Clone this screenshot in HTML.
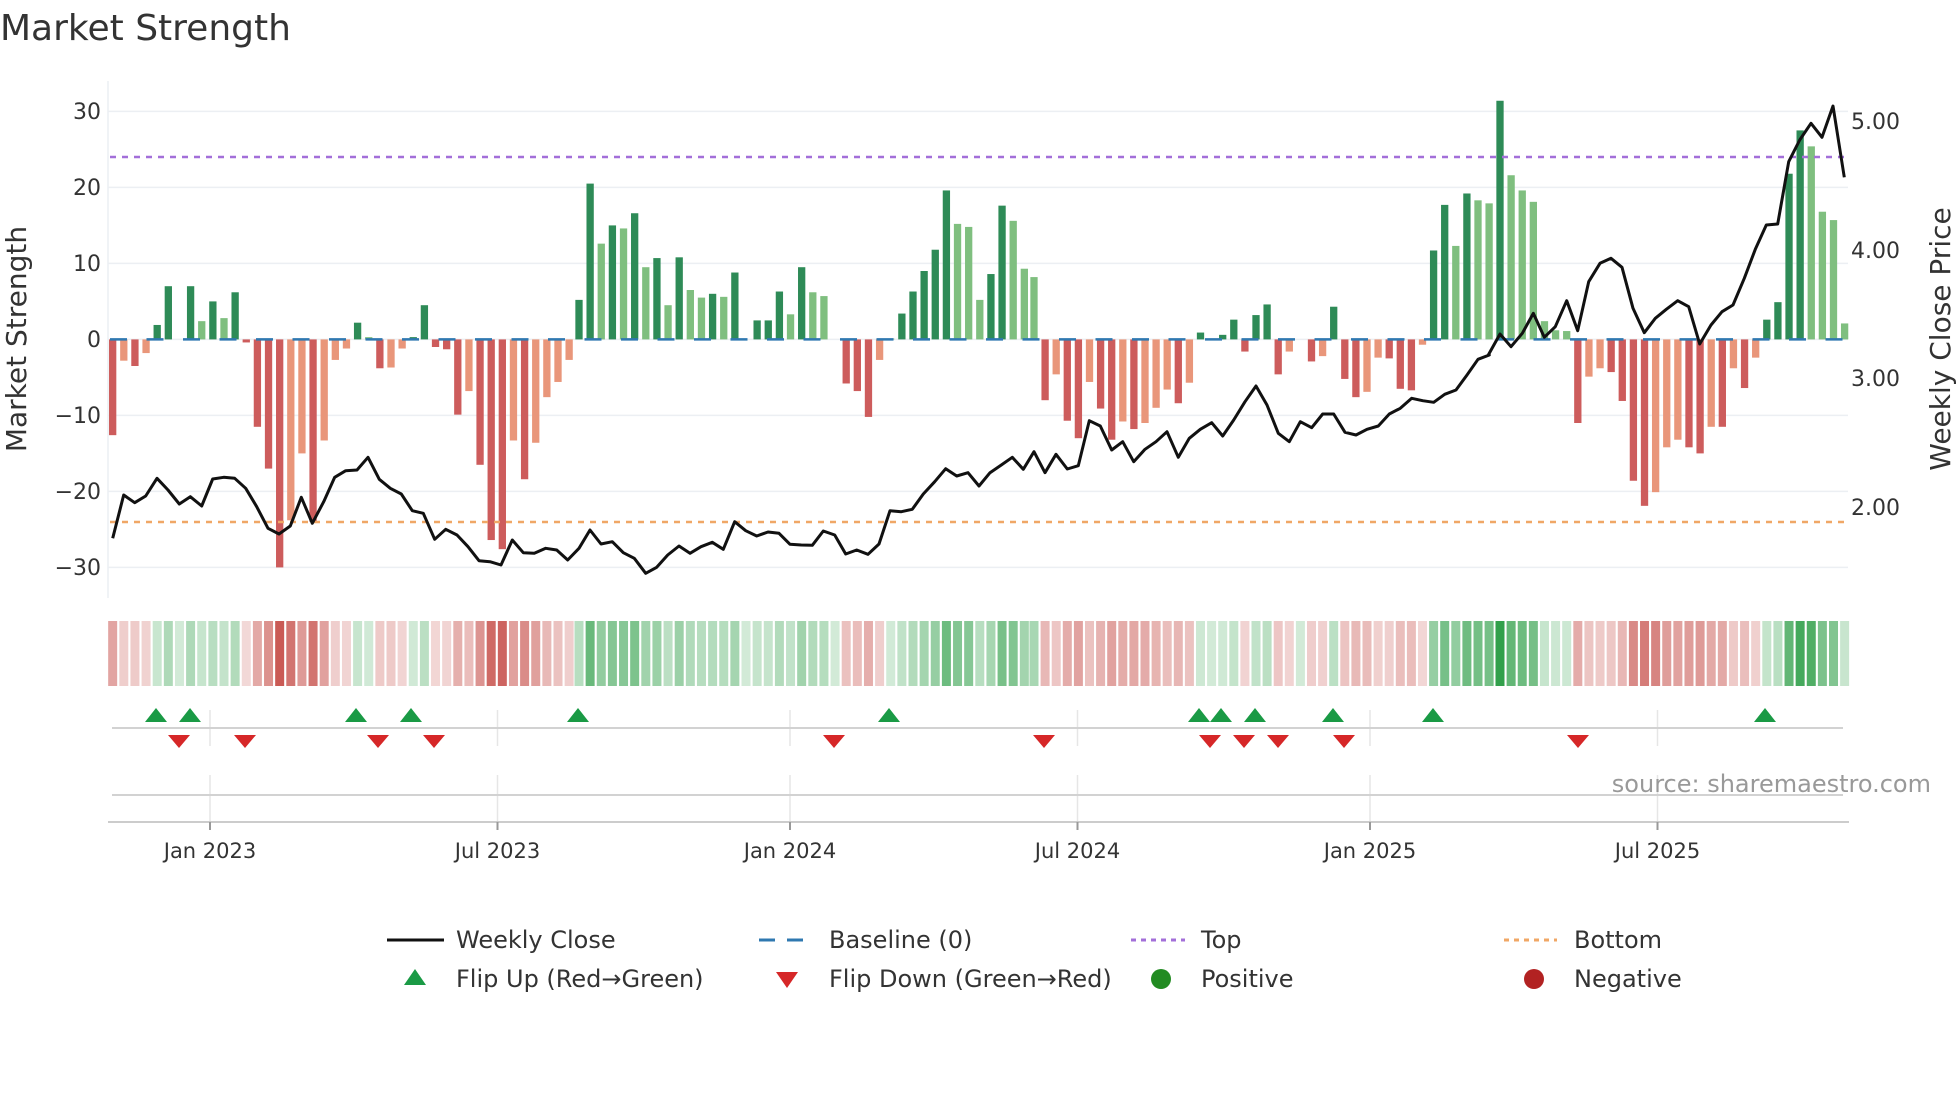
<!DOCTYPE html>
<html><head><meta charset="utf-8">
<style>
html,body{margin:0;padding:0;background:#fff;}
svg{display:block;font-family:"DejaVu Sans","Liberation Sans",sans-serif;}
</style></head>
<body>
<svg id="c" width="1960" height="1102" viewBox="0 0 1960 1102" xmlns="http://www.w3.org/2000/svg">
<rect width="1960" height="1102" fill="#fff"/>
<text x="0" y="40" font-size="36" fill="#333">Market Strength</text>
<g id="grid" stroke="#eceff3" stroke-width="1.5">
<line x1="108" y1="81" x2="108" y2="598"/>
<line x1="108" y1="111.4" x2="1848" y2="111.4"/>
<line x1="108" y1="187.4" x2="1848" y2="187.4"/>
<line x1="108" y1="263.4" x2="1848" y2="263.4"/>
<line x1="108" y1="339.4" x2="1848" y2="339.4"/>
<line x1="108" y1="415.4" x2="1848" y2="415.4"/>
<line x1="108" y1="491.4" x2="1848" y2="491.4"/>
<line x1="108" y1="567.4" x2="1848" y2="567.4"/>
</g>
<g font-size="22" fill="#333" text-anchor="end">
<text x="101" y="119">30</text>
<text x="101" y="195">20</text>
<text x="101" y="271">10</text>
<text x="101" y="347">0</text>
<text x="101" y="423">−10</text>
<text x="101" y="499">−20</text>
<text x="101" y="575">−30</text>
</g>
<g font-size="22" fill="#333">
<text x="1851" y="129">5.00</text>
<text x="1851" y="258">4.00</text>
<text x="1851" y="386">3.00</text>
<text x="1851" y="515">2.00</text>
</g>
<text transform="translate(26,339) rotate(-90)" font-size="28" fill="#333" text-anchor="middle">Market Strength</text>
<text transform="translate(1950,339) rotate(-90)" font-size="28" fill="#333" text-anchor="middle">Weekly Close Price</text>
<g id="bars"></g>
<g id="strip"></g>
<line x1="110" y1="157" x2="1845" y2="157" stroke="#a36fd9" stroke-width="2.5" stroke-dasharray="6,6"/>
<line x1="110" y1="522" x2="1845" y2="522" stroke="#f0a766" stroke-width="2.5" stroke-dasharray="6,6"/>
<g id="base"></g>
<polyline id="price" fill="none" stroke="#111" stroke-width="3" stroke-linejoin="round"/>
<g stroke="#e6e6e6" stroke-width="1.5" id="vg"></g>
<line x1="112" y1="728" x2="1843" y2="728" stroke="#d2d2d2" stroke-width="2"/>
<line x1="112" y1="795" x2="1843" y2="795" stroke="#d2d2d2" stroke-width="2"/>
<line x1="108" y1="822" x2="1849" y2="822" stroke="#cccccc" stroke-width="2"/>
<g id="flips"></g>
<g id="ticks" stroke="#999" stroke-width="2"></g>
<g font-size="21" fill="#333" text-anchor="middle">
<text x="210" y="858">Jan 2023</text>
<text x="497.5" y="858">Jul 2023</text>
<text x="790" y="858">Jan 2024</text>
<text x="1077.5" y="858">Jul 2024</text>
<text x="1370" y="858">Jan 2025</text>
<text x="1657.5" y="858">Jul 2025</text>
</g>
<text x="1931" y="792" font-size="24" fill="#999" text-anchor="end">source: sharemaestro.com</text>
<g font-size="24" fill="#333">
<line x1="387" y1="940" x2="444" y2="940" stroke="#111" stroke-width="3"/>
<text x="456" y="948">Weekly Close</text>
<line x1="759" y1="940" x2="812" y2="940" stroke="#2f78b0" stroke-width="3" stroke-dasharray="16,12"/>
<text x="829" y="948">Baseline (0)</text>
<line x1="1131" y1="940" x2="1185" y2="940" stroke="#a36fd9" stroke-width="3" stroke-dasharray="5,5"/>
<text x="1201" y="948">Top</text>
<line x1="1504" y1="940" x2="1557" y2="940" stroke="#f0a766" stroke-width="3" stroke-dasharray="5,5"/>
<text x="1574" y="948">Bottom</text>
<polygon points="404,985 426,985 415,969" fill="#1a9a45"/>
<text x="456" y="987">Flip Up (Red→Green)</text>
<polygon points="776,972 798,972 787,988" fill="#d62728"/>
<text x="829" y="987">Flip Down (Green→Red)</text>
<circle cx="1161" cy="979" r="10" fill="#228b22"/>
<text x="1201" y="987">Positive</text>
<circle cx="1534" cy="979" r="10" fill="#b22222"/>
<text x="1574" y="987">Negative</text>
</g>
</svg>
<script>
(function(){
var NS="http://www.w3.org/2000/svg";
function el(t,a,p){var e=document.createElementNS(NS,t);for(var k in a)e.setAttribute(k,a[k]);p.appendChild(e);return e;}
var segs=[
{o:100,s:38,st:33.4,v:"-12.6d,-2.8l,-3.5d,-1.8l,1.9d,7d,0d,7d,2.4l,5d,2.8l,6.2d,-0.4d,-11.5d,-17d,-30d,-23.8l,-15l,-24d,-13.3l,-2.7l,-1.2l,2.2d,0.3l,-3.8d,-3.7l,-1.2l,0.3d,4.5d,-1d,-1.3d,-9.9d,-6.8l,-16.5d,-26.4d,-27.6d,-13.3l,-18.4d,-13.6l,-7.6l,-5.6l,-2.7l"},
{o:560,s:57,st:33.4,v:"5.2d,20.5d,12.6l,15d,14.6l,16.6d,9.5l,10.7d,4.5l,10.8d,6.5l,5.5l,6d,5.6l,8.8d,0d,2.5d,2.5d,6.3d,3.3l,9.5d,6.2l,5.7l,0d,-5.8d,-6.8d,-10.2d,-2.7l,0.1l,3.4d,6.3d,9d,11.8d,19.6d,15.2l,14.8l,5.2l,8.6d,17.6d,15.6l,9.3l"},
{o:1020,s:42,st:33.3,v:"8.2l,-8d,-4.6l,-10.7d,-13d,-5.6l,-9.1d,-13.2d,-10.8l,-11.8d,-11l,-9l,-6.6l,-8.4d,-5.7l,0.9d,0d,0.6d,2.6d,-1.6d,3.2d,4.6d,-4.6d,-1.6l,0d,-2.9d,-2.2l,4.3d,-5.2d,-7.6d,-6.9l,-2.4l,-2.5d,-6.5d,-6.7d,-0.7l,11.7d,17.7d,12.3l,19.2d,18.3l,17.9l"},
{o:1480,s:60,st:33.35,v:"31.4d,21.6l,19.6l,18.1l,2.4l,1.2l,1.1l,-11d,-4.9l,-3.8l,-4.3d,-8.1d,-18.6d,-21.9d,-20.1l,-14.2l,-13.2l,-14.2d,-15d,-11.5l,-11.5d,-3.8l,-6.4d,-2.4l,2.6d,4.9d,21.8d,27.5d,25.4l,16.8l,15.7l,2.1l"}
];
var Z=339.4,U=7.6,bars=document.getElementById('bars'),strip=document.getElementById('strip');
segs.forEach(function(sg){
 sg.v.split(',').forEach(function(t,i){
  var typ=t.slice(-1),v=parseFloat(t),x=sg.o+(sg.s+sg.st*i)/3;
  var pos=v>=0,col=pos?(typ=='d'?'#2e8b57':'#7fbf7f'):(typ=='d'?'#cd5c5c':'#e9967a');
  var h=Math.abs(v)*U;
  if(h>0.3) el('rect',{x:x-3.65,y:pos?Z-h:Z,width:7.3,height:h,fill:col},bars);
  var a=Math.min(1,0.22+0.8*Math.abs(v)/32);
  var sc=pos?'rgba(50,160,75,'+a+')':'rgba(200,85,80,'+a+')';
  el('rect',{x:x-4.5,y:621,width:9,height:65,fill:sc},strip);
 });
});
el('line',{x1:110,y1:Z,x2:1845,y2:Z,stroke:'#2f78b0','stroke-width':2.5,'stroke-dasharray':'17,19.5'},document.getElementById('base'));
var L=[
[100,"38,1345 71,1215 104,1238 137,1218 171,1165 204,1200 238,1242 271,1220 305,1248 338,1167 371,1162 404,1165 437,1195 470,1250 504,1315 537,1332 571,1308 604,1222 637,1300 671,1235 704,1162 737,1142 771,1140 804,1102 838,1168 871,1195 904,1212 937,1262 970,1270 1004,1348 1037,1318 1071,1335 1104,1370 1137,1412 1170,1415 1203,1425 1237,1350 1270,1388 1303,1390 1337,1375 1370,1380 1403,1410"],
[560,"57,1375 90,1320 123,1362 157,1355 190,1388 223,1405 257,1450 290,1432 323,1395 357,1368 390,1390 423,1370 457,1357 490,1378 524,1295 557,1322 590,1338 624,1326 657,1330 690,1363 724,1365 757,1366 790,1323 824,1335 857,1392 890,1380 924,1393 957,1362 990,1262 1024,1265 1057,1258 1090,1212 1124,1175 1157,1136 1190,1158 1224,1148 1257,1188 1290,1148 1324,1125 1357,1102 1390,1138"],
[1020,"42,1085 75,1148 108,1093 142,1137 175,1127 208,992 241,1008 275,1080 308,1055 341,1115 375,1078 408,1055 441,1025 475,1102 508,1045 541,1018 575,998 608,1038 641,990 675,935 708,888 741,945 775,1030 808,1055 841,995 875,1013 908,972 941,972 975,1027 1008,1035 1041,1018 1075,1008 1108,972 1141,955 1175,925 1208,932 1241,937 1274,913 1308,900 1341,855 1374,808 1408,795"],
[1480,"25,795 60,732 93,770 127,730 160,670 193,742 226,710 260,632 293,722 326,575 360,520 393,505 426,532 459,655 493,728 526,685 559,658 593,632 626,650 659,762 693,705 726,665 759,645 793,565 826,478 859,405 893,402 926,215 959,150 993,100 1026,142 1059,48 1093,262"]];
var pts=[];
L.forEach(function(s){s[1].split(' ').forEach(function(p){var q=p.split(',');pts.push((s[0]+q[0]/3).toFixed(1)+','+(90+q[1]/3).toFixed(1));});});
document.getElementById('price').setAttribute('points',pts.join(' '));
var fl=document.getElementById('flips');
[156,190,356,411,578,889,1199,1221,1255,1333,1433,1765].forEach(function(x){el('polygon',{points:(x-11)+',722 '+(x+11)+',722 '+x+',708',fill:'#1a9a45'},fl);});
[179,245,378,434,834,1044,1210,1244,1278,1344,1578].forEach(function(x){el('polygon',{points:(x-11)+',735 '+(x+11)+',735 '+x+',748',fill:'#d62728'},fl);});
var vg=document.getElementById('vg'),tk=document.getElementById('ticks');
[210,497.5,790,1077.5,1370,1657.5].forEach(function(x){
 el('line',{x1:x,y1:710,x2:x,y2:746},vg);el('line',{x1:x,y1:775,x2:x,y2:822},vg);
 el('line',{x1:x,y1:822,x2:x,y2:830},tk);
});
})();
</script>
</body></html>
